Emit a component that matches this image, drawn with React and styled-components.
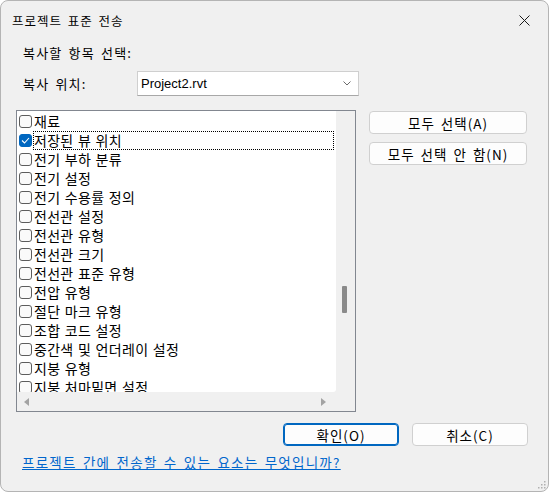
import React from 'react';
import styled, { createGlobalStyle } from 'styled-components';

const items = [
	'재료',
	'저장된 뷰 위치',
	'전기 부하 분류',
	'전기 설정',
	'전기 수용률 정의',
	'전선관 설정',
	'전선관 유형',
	'전선관 크기',
	'전선관 표준 유형',
	'전압 유형',
	'절단 마크 유형',
	'조합 코드 설정',
	'중간색 및 언더레이 설정',
	'지붕 유형',
	'지붕 처마밑면 설정',
];

const checkedIndex = 1;

const GlobalStyle = createGlobalStyle`
	html, body {
		margin: 0;
		padding: 0;
		background: #ffffff;
	}
	* {
		box-sizing: border-box;
	}
	body {
		font-family: "Noto Sans CJK KR", "Liberation Sans", sans-serif;
		font-size: 13px;
		color: #000;
	}
`;

const Window = styled.div`
	width: 549px;
	height: 492px;
	border: 1px solid #b4b4b4;
	border-radius: 8px;
	background: #f0f0f0;
	display: flex;
	flex-direction: column;
	overflow: hidden;
	position: relative;
`;

const TitleBar = styled.div`
	height: 39px;
	display: flex;
	align-items: center;
	justify-content: space-between;
	padding: 0 18px 0 11px;
`;

const Title = styled.div`
	font-size: 12.5px;
	letter-spacing: 1px;
	word-spacing: 2px;
	line-height: 16px;
	margin-top: 1px;
`;

const Body = styled.div`
	display: flex;
	flex-direction: column;
	padding: 0 20px 0 15px;
`;

const Label = styled.div`
	height: 18px;
	line-height: 18px;
	padding-left: 7px;
	letter-spacing: 1.2px;
	word-spacing: 2px;
	margin-top: ${(p) => p.mt || 0}px;
`;

const TargetRow = styled.div`
	display: flex;
	align-items: center;
	margin-top: 9px;
	height: 25px;
`;

const TargetLabel = styled(Label)`
	width: 121px;
`;

const Select = styled.div`
	width: 222px;
	height: 25px;
	background: #fff;
	border: 1px solid #cfcfcf;
	border-bottom-color: #a8a8a8;
	display: flex;
	align-items: center;
	justify-content: space-between;
	padding: 0 7px 0 3px;
	font-size: 13px;
	font-family: "Liberation Sans", "Noto Sans CJK KR", sans-serif;
`;

const Main = styled.div`
	display: flex;
	margin-top: 14px;
	gap: 13px;
`;

const ListBox = styled.div`
	width: 340px;
	height: 302px;
	border: 1px solid #828790;
	background: #f0f0f0;
	display: grid;
	grid-template-columns: 1fr 19px;
	grid-template-rows: 1fr 19px;
`;

const ListContent = styled.div`
	background: #fff;
	overflow: hidden;
	padding-top: 1px;
	border-bottom-right-radius: 3px;
`;

const Row = styled.div`
	height: 19px;
	flex: none;
	display: flex;
	align-items: center;
	padding-left: 2px;
`;

const Check = styled.span`
	width: 13px;
	height: 13px;
	flex: none;
	border-radius: 3px;
	border: 1px solid ${(p) => (p.checked ? '#0067c0' : '#5d5d5d')};
	background: ${(p) => (p.checked ? '#0067c0' : '#fafafa')};
	display: flex;
	align-items: center;
	justify-content: center;
`;

const ItemText = styled.span`
	flex: 1;
	height: 19px;
	line-height: 16px;
	margin-left: 1px;
	margin-right: 2px;
	font-size: 14px;
	letter-spacing: 0.3px;
	word-spacing: 1px;
	white-space: nowrap;
	border: 1px dotted ${(p) => (p.focused ? '#000' : 'transparent')};
`;

const VScroll = styled.div`
	padding-left: 6px;
`;

const Thumb = styled.div`
	width: 5px;
	height: 27px;
	margin-top: 175px;
	background: #8a8a8a;
	border-radius: 1px;
`;

const HScroll = styled.div`
	display: flex;
	align-items: center;
	justify-content: space-between;
	padding: 0 10px 0 7px;
`;

const Corner = styled.div`
	background: #f0f0f0;
`;

const Side = styled.div`
	display: flex;
	flex-direction: column;
	gap: 8px;
	padding-top: 1px;
`;

const Button = styled.div`
	width: ${(p) => p.w || 158}px;
	height: 23px;
	background: #fdfdfd;
	border: 1px solid ${(p) => (p.primary ? '#0067c0' : '#d0d0d0')};
	box-shadow: ${(p) => (p.primary ? 'inset 0 0 0 1px #0067c0' : 'none')};
	border-radius: 4px;
	display: flex;
	align-items: center;
	justify-content: center;
	font-size: 13.5px;
	letter-spacing: 1px;
	word-spacing: 2px;
	line-height: 16px;
`;

const Footer = styled.div`
	display: flex;
	justify-content: flex-end;
	gap: 13px;
	margin-top: 11px;
`;

const HelpLink = styled.a`
	display: block;
	margin-top: 8px;
	padding-left: 6px;
	height: 16px;
	line-height: 16px;
	color: #0066cc;
	text-decoration: underline;
	font-size: 13.5px;
	letter-spacing: 1.25px;
	word-spacing: 2px;
	cursor: pointer;
`;

const Grip = styled.svg`
	position: absolute;
	right: 2px;
	bottom: 2px;
`;

const CloseIcon = () => (
	<svg width="11" height="11" viewBox="0 0 11 11">
		<path d="M0.5 0.5 L10.5 10.5 M10.5 0.5 L0.5 10.5" stroke="#1a1a1a" strokeWidth="1" />
	</svg>
);

const Chevron = () => (
	<svg width="8" height="5" viewBox="0 0 8 5">
		<path d="M0.5 0.5 L4 4 L7.5 0.5" stroke="#6b6b6b" strokeWidth="1" fill="none" />
	</svg>
);

const Tick = () => (
	<svg width="9" height="7" viewBox="0 0 9 7">
		<path d="M1 3.5 L3.5 6 L8 1" stroke="#fff" strokeWidth="1.1" fill="none" />
	</svg>
);

const Arrow = ({ dir }) => (
	<svg width="5" height="8" viewBox="0 0 5 8">
		{dir === 'left' ? (
			<path d="M5 0 L0 4 L5 8 Z" fill="#a3a3a3" />
		) : (
			<path d="M0 0 L5 4 L0 8 Z" fill="#a3a3a3" />
		)}
	</svg>
);

const App = () => {
	return (
		<>
			<GlobalStyle />
			<Window>
				<TitleBar>
					<Title>프로젝트 표준 전송</Title>
					<CloseIcon />
				</TitleBar>
				<Body>
					<Label mt={4}>복사할 항목 선택:</Label>
					<TargetRow>
						<TargetLabel>복사 위치:</TargetLabel>
						<Select>
							<span>Project2.rvt</span>
							<Chevron />
						</Select>
					</TargetRow>
					<Main>
						<ListBox>
							<ListContent>
								{items.map((name, i) => (
									<Row key={name}>
										<Check checked={i === checkedIndex}>
											{i === checkedIndex && <Tick />}
										</Check>
										<ItemText focused={i === checkedIndex}>{name}</ItemText>
									</Row>
								))}
							</ListContent>
							<VScroll>
								<Thumb />
							</VScroll>
							<HScroll>
								<Arrow dir="left" />
								<Arrow dir="right" />
							</HScroll>
							<Corner />
						</ListBox>
						<Side>
							<Button>모두 선택(A)</Button>
							<Button>모두 선택 안 함(N)</Button>
						</Side>
					</Main>
					<Footer>
						<Button primary w={116}>확인(O)</Button>
						<Button w={116}>취소(C)</Button>
					</Footer>
					<HelpLink>프로젝트 간에 전송할 수 있는 요소는 무엇입니까?</HelpLink>
				</Body>
				<Grip width="10" height="10" viewBox="0 0 10 10">
					<rect x="8" y="2" width="1.5" height="1.5" fill="#b0b0b0" />
					<rect x="5" y="5" width="1.5" height="1.5" fill="#b0b0b0" />
					<rect x="8" y="5" width="1.5" height="1.5" fill="#b0b0b0" />
					<rect x="2" y="8" width="1.5" height="1.5" fill="#b0b0b0" />
					<rect x="5" y="8" width="1.5" height="1.5" fill="#b0b0b0" />
					<rect x="8" y="8" width="1.5" height="1.5" fill="#b0b0b0" />
				</Grip>
			</Window>
		</>
	);
};

export default App;
